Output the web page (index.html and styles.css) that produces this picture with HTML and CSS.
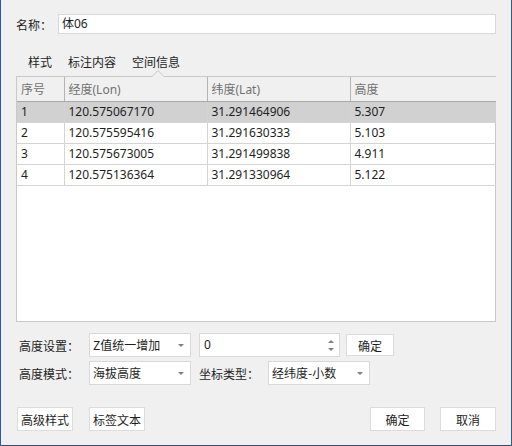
FILE: index.html
```html
<!DOCTYPE html>
<html>
<head>
<meta charset="utf-8">
<link rel="stylesheet" href="styles.css">
</head>
<body>
<div class="window">
  <div class="name-row">
    <span class="label name-label">名称：</span>
    <div class="textbox">体06</div>
  </div>
  <div class="tabs">
    <span class="tab">样式</span>
    <span class="tab">标注内容</span>
    <span class="tab active">空间信息</span>
  </div>
  <div class="grid">
    <div class="notch"></div>
    <table>
      <colgroup><col class="c1"><col class="c2"><col class="c3"><col class="c4"></colgroup>
      <thead>
        <tr><th>序号</th><th>经度(Lon)</th><th>纬度(Lat)</th><th>高度</th></tr>
      </thead>
      <tbody>
        <tr class="sel"><td>1</td><td>120.575067170</td><td>31.291464906</td><td>5.307</td></tr>
        <tr><td>2</td><td>120.575595416</td><td>31.291630333</td><td>5.103</td></tr>
        <tr><td>3</td><td>120.575673005</td><td>31.291499838</td><td>4.911</td></tr>
        <tr><td>4</td><td>120.575136364</td><td>31.291330964</td><td>5.122</td></tr>
      </tbody>
    </table>
  </div>
  <div class="ctrl-row row1">
    <span class="label lbl">高度设置：</span>
    <div class="combo"><span>Z值统一增加</span><i class="arrow"></i></div>
    <div class="spin"><span>0</span>
      <div class="spin-btns"><i class="up"></i><i class="down"></i></div>
    </div>
    <div class="btn small">确定</div>
  </div>
  <div class="ctrl-row row2">
    <span class="label lbl">高度模式：</span>
    <div class="combo"><span>海拔高度</span><i class="arrow"></i></div>
    <span class="label lbl2">坐标类型：</span>
    <div class="combo"><span>经纬度-小数</span><i class="arrow"></i></div>
  </div>
  <div class="bottom-row">
    <div class="btn b1">高级样式</div>
    <div class="btn b2">标签文本</div>
    <div class="spacer"></div>
    <div class="btn b3">确定</div>
    <div class="btn b4">取消</div>
  </div>
</div>
</body>
</html>
```
FILE: styles.css
```css
* { box-sizing: border-box; }
html, body { margin: 0; padding: 0; }
body {
  width: 512px; height: 446px; overflow: hidden;
  background: #f0f0f0;
  font-family: "Noto Sans", "Noto Sans CJK SC", sans-serif;
  font-size: 12px; color: #1e1e1e;
}
.window {
  width: 512px; height: 446px;
  border-left: 1px solid #2c5a9a;
  border-right: 1px solid #2c5a9a;
  border-bottom: 1px solid #2c4f80;
  padding: 14px 15px 0 15px;
}
.label { font-family: "Noto Sans CJK SC", sans-serif; white-space: nowrap; }
.name-row { display: flex; align-items: center; height: 20px; }
.name-label { width: 42px; }
.textbox {
  flex: 1; height: 20px; background: #fff;
  border: 1px solid #d9d9d9;
  padding-left: 3px; line-height: 17px;
}
.tabs {
  display: flex; height: 42px; align-items: center;
  padding-left: 12px; padding-top: 12px;
  font-family: "Noto Sans CJK SC", sans-serif;
}
.tab { margin-right: 16px; }
.grid {
  position: relative;
  height: 246px; background: #fff;
  border: 1px solid #c9c9c9;
}
.notch {
  position: absolute; top: -7px; left: 134px;
  width: 0; height: 0;
  border-left: 7px solid transparent; border-right: 7px solid transparent;
  border-bottom: 7px solid #c9c9c9;
}
.notch::after {
  content: ""; position: absolute; left: -6px; top: 1px;
  border-left: 6px solid transparent; border-right: 6px solid transparent;
  border-bottom: 6px solid #f0f0f0;
}
table { border-collapse: collapse; width: 479px; table-layout: fixed; }
col.c1 { width: 47px; } col.c2 { width: 143px; } col.c3 { width: 143px; }
th {
  height: 24px; background: #f0f0f0; text-align: left; font-weight: normal;
  color: #707070; padding: 0 0 0 4px;
  border-right: 1px solid #b4b4b4; border-bottom: 1px solid #a8a8a8;
}
th:last-child { border-right: none; }
td {
  height: 21px; padding: 0 0 0 4px;
  border-right: 1px solid #d4d4d4; border-bottom: 1px solid #d4d4d4;
  color: #1e1e1e;
}
td:last-child { border-right: none; }
tr.sel td { background: #d1d1d1; }
.ctrl-row { display: flex; align-items: center; height: 24px; }
.row1 { margin-top: 11px; }
.row2 { margin-top: 4px; }
.lbl { width: 73px; padding-left: 3px; }
.lbl2 { width: 69px; }
.combo {
  position: relative; width: 102px; height: 24px; background: #fff;
  border: 1px solid #d9d9d9; padding-left: 3px; line-height: 22px;
  font-family: "Noto Sans CJK SC", sans-serif;
  margin-right: 8px;
}
.arrow {
  position: absolute; right: 6px; top: 10px;
  border-left: 3px solid transparent; border-right: 3px solid transparent;
  border-top: 3px solid #808080;
}
.spin {
  position: relative; width: 141px; height: 24px; background: #fff;
  border: 1px solid #d9d9d9; padding-left: 4px; line-height: 22px;
  margin-right: 6px;
}
.spin-btns i { position: absolute; right: 5px; border-left: 3px solid transparent; border-right: 3px solid transparent; }
.spin-btns .up { top: 6px; border-bottom: 3px solid #808080; }
.spin-btns .down { top: 14px; border-top: 3px solid #808080; }
.btn {
  background: #fff; border: 1px solid #dcdcdc;
  display: flex; align-items: center; justify-content: center;
  font-family: "Noto Sans CJK SC", sans-serif;
  height: 24px;
}
.btn.small { width: 48px; height: 22px; }
.bottom-row { display: flex; align-items: center; margin-top: 22px; height: 24px; }
.b1 { width: 56px; margin-left: 1px; }
.b2 { width: 56px; margin-left: 16px; }
.spacer { flex: 1; }
.b3 { width: 55px; margin-right: 15px; }
.b4 { width: 56px; }
```
